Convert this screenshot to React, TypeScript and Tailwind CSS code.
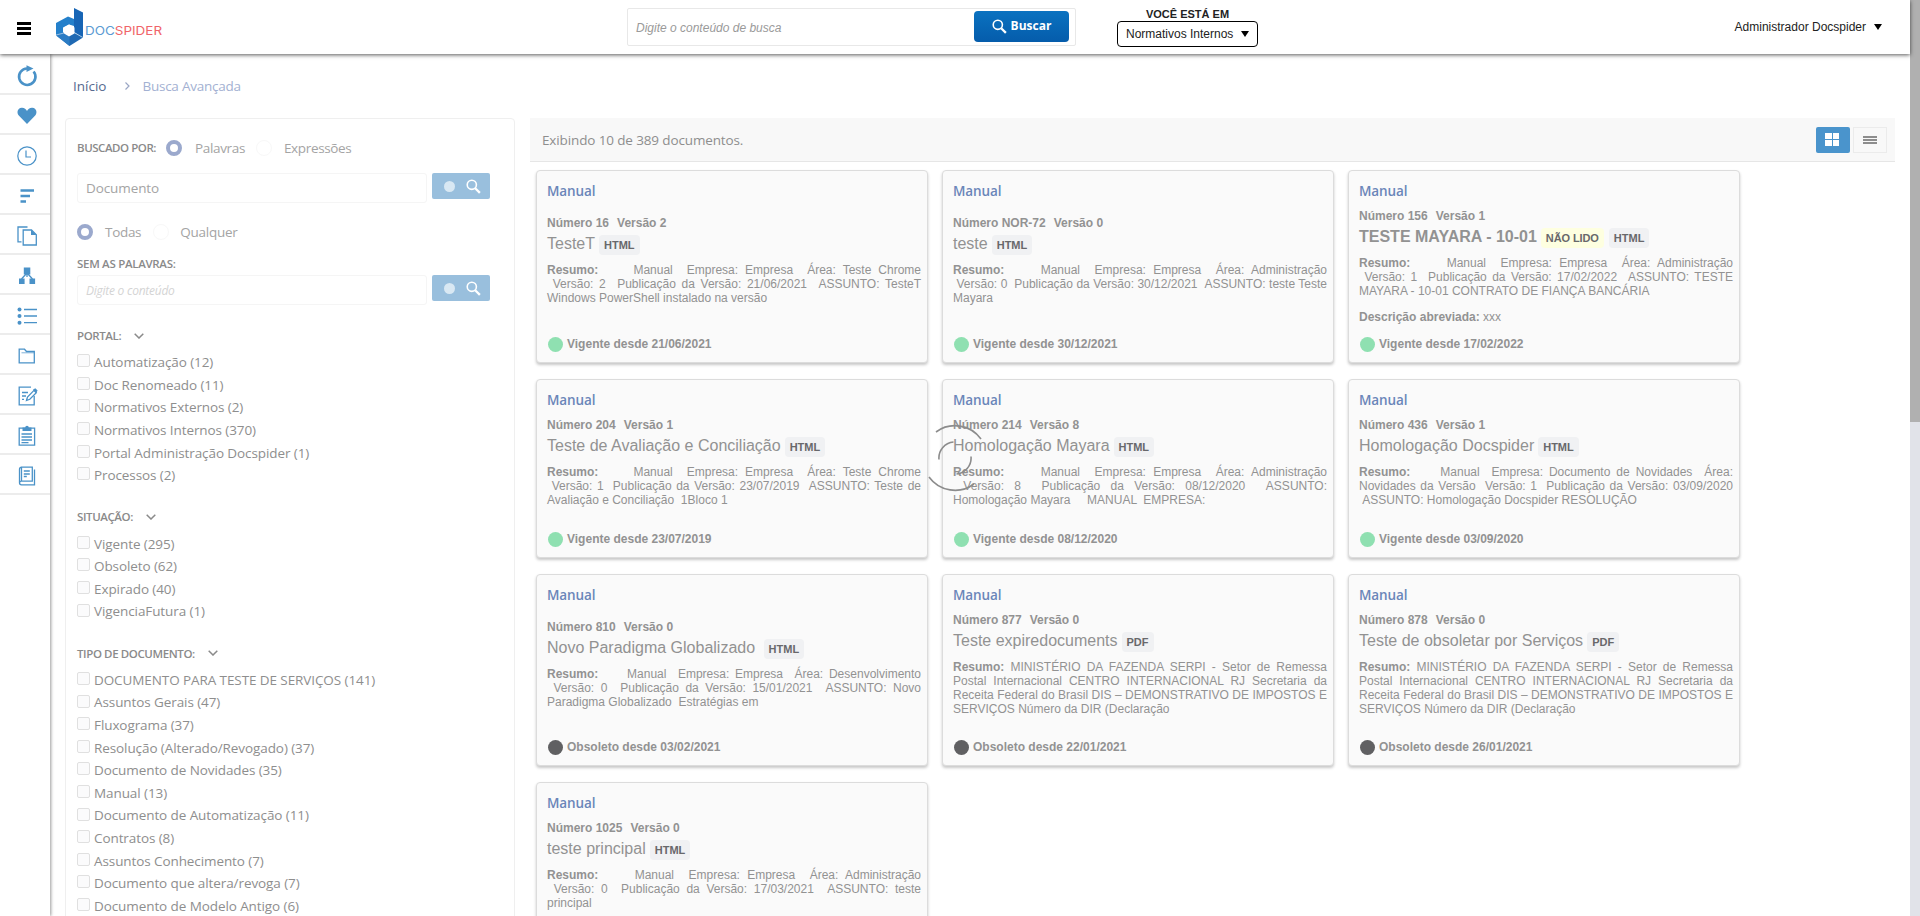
import React from "react";

const NB = "\u00a0";

type Doc = {
  numero: string;
  versao: string;
  title: string;
  type: string;
  unread?: boolean;
  lines: string[];
  extra?: string;
  status: string;
  obsolete?: boolean;
  lowered?: boolean;
};

const HEAD = `${NB}${NB}${NB}${NB} Manual ${NB}Empresa: `;
const MINISTERIO = [
  " MINISTÉRIO DA FAZENDA SERPI - Setor de Remessa",
  "Postal Internacional CENTRO INTERNACIONAL RJ Secretaria da",
  "Receita Federal do Brasil DIS – DEMONSTRATIVO DE IMPOSTOS E",
  "SERVIÇOS Número da DIR (Declaração",
];

const rows: { height: string; docs: Doc[] }[] = [
  {
    height: "h-[193px]",
    docs: [
      {
        numero: "16",
        versao: "2",
        title: "TesteT",
        type: "HTML",
        lines: [
          `${HEAD}Empresa ${NB}Área: Teste Chrome`,
          `${NB}Versão: 2 ${NB}Publicação da Versão: 21/06/2021 ${NB}ASSUNTO: TesteT`,
          "Windows PowerShell instalado na versão",
        ],
        status: "Vigente desde 21/06/2021",
        lowered: true,
      },
      {
        numero: "NOR-72",
        versao: "0",
        title: "teste",
        type: "HTML",
        lines: [
          `${HEAD}Empresa ${NB}Área: Administração`,
          `${NB}Versão: 0 ${NB}Publicação da Versão: 30/12/2021 ${NB}ASSUNTO: teste Teste`,
          "Mayara",
        ],
        status: "Vigente desde 30/12/2021",
        lowered: true,
      },
      {
        numero: "156",
        versao: "1",
        title: "TESTE MAYARA - 10-01",
        type: "HTML",
        unread: true,
        lines: [
          `${HEAD}Empresa ${NB}Área: Administração`,
          `${NB}Versão: 1 ${NB}Publicação da Versão: 17/02/2022 ${NB}ASSUNTO: TESTE`,
          "MAYARA - 10-01 CONTRATO DE FIANÇA BANCÁRIA",
        ],
        extra: "xxx",
        status: "Vigente desde 17/02/2022",
      },
    ],
  },
  {
    height: "h-[179px]",
    docs: [
      {
        numero: "204",
        versao: "1",
        title: "Teste de Avaliação e Conciliação",
        type: "HTML",
        lines: [
          `${HEAD}Empresa ${NB}Área: Teste Chrome`,
          `${NB}Versão: 1 ${NB}Publicação da Versão: 23/07/2019 ${NB}ASSUNTO: Teste de`,
          `Avaliação e Conciliação ${NB}1Bloco 1`,
        ],
        status: "Vigente desde 23/07/2019",
      },
      {
        numero: "214",
        versao: "8",
        title: "Homologação Mayara",
        type: "HTML",
        lines: [
          `${HEAD}Empresa ${NB}Área: Administração`,
          `${NB}Versão: 8 ${NB}Publicação da Versão: 08/12/2020 ${NB}ASSUNTO:`,
          `Homologação Mayara ${NB}${NB}${NB}${NB}MANUAL ${NB}EMPRESA:`,
        ],
        status: "Vigente desde 08/12/2020",
      },
      {
        numero: "436",
        versao: "1",
        title: "Homologação Docspider",
        type: "HTML",
        lines: [
          `${HEAD}Documento de Novidades ${NB}Área:`,
          `Novidades da Versão ${NB}Versão: 1 ${NB}Publicação da Versão: 03/09/2020`,
          `${NB}ASSUNTO: Homologação Docspider RESOLUÇÃO`,
        ],
        status: "Vigente desde 03/09/2020",
      },
    ],
  },
  {
    height: "h-[192px]",
    docs: [
      {
        numero: "810",
        versao: "0",
        title: `Novo Paradigma Globalizado${NB}`,
        type: "HTML",
        lines: [
          `${HEAD}Empresa ${NB}Área: Desenvolvimento`,
          `${NB}Versão: 0 ${NB}Publicação da Versão: 15/01/2021 ${NB}ASSUNTO: Novo`,
          `Paradigma Globalizado ${NB}Estratégias em`,
        ],
        status: "Obsoleto desde 03/02/2021",
        obsolete: true,
        lowered: true,
      },
      {
        numero: "877",
        versao: "0",
        title: "Teste expiredocuments",
        type: "PDF",
        lines: MINISTERIO,
        status: "Obsoleto desde 22/01/2021",
        obsolete: true,
      },
      {
        numero: "878",
        versao: "0",
        title: "Teste de obsoletar por Serviços",
        type: "PDF",
        lines: MINISTERIO,
        status: "Obsoleto desde 26/01/2021",
        obsolete: true,
      },
    ],
  },
  {
    height: "h-[192px]",
    docs: [
      {
        numero: "1025",
        versao: "0",
        title: "teste principal",
        type: "HTML",
        lines: [
          `${HEAD}Empresa ${NB}Área: Administração`,
          `${NB}Versão: 0 ${NB}Publicação da Versão: 17/03/2021 ${NB}ASSUNTO: teste`,
          "principal",
        ],
        status: "",
      },
    ],
  },
];

const filters = [
  {
    name: "PORTAL:",
    items: [
      "Automatização (12)",
      "Doc Renomeado (11)",
      "Normativos Externos (2)",
      "Normativos Internos (370)",
      "Portal Administração Docspider (1)",
      "Processos (2)",
    ],
  },
  {
    name: "SITUAÇÃO:",
    items: ["Vigente (295)", "Obsoleto (62)", "Expirado (40)", "VigenciaFutura (1)"],
  },
  {
    name: "TIPO DE DOCUMENTO:",
    items: [
      "DOCUMENTO PARA TESTE DE SERVIÇOS (141)",
      "Assuntos Gerais (47)",
      "Fluxograma (37)",
      "Resolução (Alterado/Revogado) (37)",
      "Documento de Novidades (35)",
      "Manual (13)",
      "Documento de Automatização (11)",
      "Contratos (8)",
      "Assuntos Conhecimento (7)",
      "Documento que altera/revoga (7)",
      "Documento de Modelo Antigo (6)",
    ],
  },
];

const railIcons: React.ReactNode[] = [
  <g key="refresh">
    <path d="M16.600 5.500A8.200 8.200 0 1 1 10 2.500" strokeWidth="2.600" />
    <path d="M9.500-.8 16.500 2.600 9.500 6Z" fill="currentColor" stroke="none" />
  </g>,
  <path
    key="heart"
    d="M10 18 1.800 9.600C-.6 6.800.4 2.200 4.600 1.800 7.200 1.600 9 3 10 5 11 3 12.800 1.600 15.400 1.800 19.600 2.200 20.600 6.800 18.200 9.600Z"
    fill="currentColor"
    stroke="none"
  />,
  <g key="clock" strokeWidth="1.200">
    <circle cx="10" cy="10" r="9.200" />
    <path d="M9 4.500V11h5" />
  </g>,
  <path key="bars" d="M3.500 4.500H17M3.500 10H13M3.500 15.500H9" strokeWidth="2.600" />,
  <g key="copy" strokeWidth="1.300">
    <path d="M4.500 15.800H1V1h9.500" />
    <path d="M6.200 4h8.300l4.800 4.800V19H6.200Z" />
    <path d="M14 3.800V9h5.500Z" fill="currentColor" stroke="none" />
  </g>,
  <g key="tree" strokeWidth="1.300">
    <path d="M10 8v3M9 8 4.500 13M11 8l4.500 5" />
    <path
      d="M6.800 1.500h6.500v7H6.800ZM2 12.500h5.600v5.600H2ZM12.500 12.500h5.600v5.600h-5.600Z"
      fill="currentColor"
      stroke="none"
    />
  </g>,
  <g key="list" strokeWidth="1.300">
    <path d="M7 3.500h13M7 10h13M7 16.700h13" />
    <g fill="currentColor" stroke="none">
      <circle cx="2.500" cy="3.500" r="2" />
      <circle cx="2.500" cy="10" r="2" />
      <circle cx="2.500" cy="16.700" r="2" />
    </g>
  </g>,
  <g key="folder" strokeWidth="1.300">
    <path d="M2.200 16.800V3.200h5.300l2 2.300h7.800v11.300Z" />
    <path d="M4.500 6.800h12.800" strokeWidth=".7" />
  </g>,
  <g key="edit" strokeWidth="1.300">
    <path d="M14 1.200H2.200v17.600h15V10" />
    <path d="M5 6.500h6M5 10h4M5 13.300h2M9 13.300h.8" />
    <path d="m9.500 14.500 1-3.500 6.500-6.600 2.300 2.300-6.500 6.600Z" />
    <path d="m17 3.800 1.200-.8 1.600 1.600-.8 1.400Z" fill="currentColor" />
  </g>,
  <g key="clipboard" strokeWidth="1.300">
    <path d="M2.200 2.200h15.400v17H2.200Z" />
    <path d="M5.500 1.500h2.700a1.800 1.800 0 0 1 3.600 0h2.700V5h-9Z" fill="currentColor" stroke="none" />
    <path d="M4.500 8h10.500M4.500 11h10.500M4.500 14h10.500M4.500 16.700h7" />
  </g>,
  <g key="book" strokeWidth="1.300">
    <path d="M4.500 1.200h10.800v14H4.500ZM4.500 1.200a2 2 0 0 0-2 2v13.600a2 2 0 0 0 2 2h13V3.500M2.500 17a2 2 0 0 1 2-1.800M6.800 5h6M6.800 8h6M6.800 10.500h3" />
  </g>,
];

function SearchIcon({ className }: { className: string }) {
  return (
    <svg viewBox="0 0 16 16" className={className} fill="none" stroke="currentColor">
      <circle cx="6.200" cy="6.200" r="4.900" strokeWidth="1.700" />
      <path d="m9.800 9.800 5 5" strokeWidth="2.400" />
    </svg>
  );
}

function Radio({ on, className }: { on?: boolean; className: string }) {
  return (
    <span
      className={`size-4 shrink-0 rounded-full ${on ? "border-[4.5px] border-[#9ba9cd]" : "border border-[#f8f8f8]"} ${className}`}
    />
  );
}

function SearchField({ children }: { children: React.ReactNode }) {
  return (
    <div className="flex items-start gap-[5px]">
      <div className="flex h-[30px] w-[350px] items-center rounded-[3px] border border-[#f5f5f5] pt-px pl-2">
        {children}
      </div>
      <button className="flex h-[26px] w-[58px] items-center rounded-[2px] bg-[#99bfdd] pl-3 text-white">
        <span className="size-[11px] rounded-full bg-[#d9e8f3]" />
        <SearchIcon className="ml-[11px] size-[15px]" />
      </button>
    </div>
  );
}

function Badge({ children, yellow }: { children: React.ReactNode; yellow?: boolean }) {
  return (
    <span
      className={`flex h-5 items-center rounded-[4px] text-[11px] leading-5 font-bold text-[#68686b] ${yellow ? "bg-[#feffe0] px-[5px] tracking-[-0.1px]" : "bg-[#f0f1f3] px-[5px]"}`}
    >
      {children}
    </span>
  );
}

function Card({ doc, height }: { doc: Doc; height: string }) {
  return (
    <article
      className={`flex w-[392px] flex-col rounded-[4px] border border-[#dcdcdc] bg-[#fafafa] pt-[10px] pr-[6px] pb-[10px] pl-[10px] text-xs text-[#929292] shadow-[0_2px_3px_rgba(0,0,0,0.22)] ${height}`}
    >
      <h3 className="font-['Open_Sans',sans-serif] text-[13.500px] leading-5 font-semibold tracking-[-0.1px] text-[#6a86b9]">
        Manual
      </h3>
      <div className={`flex gap-2 leading-[14px] font-bold ${doc.lowered ? "mt-[15px]" : "mt-2"}`}>
        <span>Número {doc.numero}</span>
        <span>Versão {doc.versao}</span>
      </div>
      <div className="mt-1 flex h-5 gap-1">
        <h2 className={`text-base leading-5 whitespace-pre ${doc.unread ? "font-bold" : ""}`}>{doc.title}</h2>
        <div className="flex gap-[5px] pt-px">
          {doc.unread && <Badge yellow>NÃO LIDO</Badge>}
          <Badge>{doc.type}</Badge>
        </div>
      </div>
      <div className="mt-[9px] leading-[14px]">
        {doc.lines.map((line, i) => (
          <p
            key={i}
            className={`whitespace-nowrap ${i < doc.lines.length - 1 ? "text-justify [text-align-last:justify]" : ""}`}
          >
            {i === 0 && <b>Resumo:</b>}
            {line}
          </p>
        ))}
      </div>
      {doc.extra && (
        <p className="mt-3 leading-[14px]">
          <b>Descrição abreviada:</b> {doc.extra}
        </p>
      )}
      {doc.status && (
        <div className="mt-auto flex items-center gap-1 pl-px leading-[15px] font-bold">
          <span className={`size-[15px] rounded-full ${doc.obsolete ? "bg-[#606062]" : "bg-[#8fe0b1]"}`} />
          {doc.status}
        </div>
      )}
    </article>
  );
}

function Logo() {
  return (
    <div className="ml-[25px] flex items-center">
      <svg viewBox="0 0 27 38" className="h-[38px] w-[27px]">
        <path d="M18 0 27 4.500V30L18 24Z" fill="#1765b5" />
        <path d="M0 15 12 8.500l6 2.500v7l-5-1.500-6 3v10L0 27Z" fill="#2480cb" />
        <path d="M0 27l8-2.500 5 3 5-3 9 5L13.500 38Z" fill="#1f69b3" />
        <path d="M0 27.500 13.500 38V29L7 25Z" fill="#2b7cc4" />
        <path d="M13 16.500 18.500 19.500V25.500L13 28.500 8 25.500V19.500Z" fill="#fff" />
        <path d="m0 27 8-2M27 29.500l-9-5" stroke="#cfe4f5" strokeWidth=".7" />
      </svg>
      <span className="mt-[8px] ml-[2px] w-[78px] origin-left scale-x-[1.120] font-[Inter,sans-serif] text-[12px] leading-3 text-[#5b9bd3]">
        DOC<span className="text-[#f0646a]">SPIDER</span>
      </span>
    </div>
  );
}

function Caret({ className }: { className: string }) {
  return (
    <svg viewBox="0 0 8 6" className={`h-1.5 w-2 ${className}`}>
      <path d="M0 0h8L4 6Z" fill="#000" />
    </svg>
  );
}

export default function App() {
  return (
    <div className="flex h-[916px] w-[1920px] overflow-hidden bg-white font-['Liberation_Sans',Arial,sans-serif]">
      <div className="flex w-[1910px] flex-col">
        <header className="relative z-20 flex h-[54px] shrink-0 bg-white shadow-[0_1px_4px_rgba(0,0,0,0.65)]">
          <div className="flex w-[627px] pl-[17px]">
            <button className="mt-[22px] flex h-[13px] w-[14px] flex-col justify-between">
              <i className="h-[3px] bg-black" />
              <i className="h-[3px] bg-black" />
              <i className="h-[3px] bg-black" />
            </button>
            <Logo />
          </div>
          <div className="mt-2 flex h-[38px] w-[449px] items-center justify-between rounded-[2px] border border-[#e8e8e8] pr-[6px] pl-2">
            <span className="mt-px text-xs text-[#9a9a9a] italic">Digite o conteúdo de busca</span>
            <button className="mb-px flex h-[31px] w-[95px] items-center justify-center gap-1 rounded-[4px] bg-linear-to-b from-[#0b72c0] to-[#055cab] pb-px font-['Open_Sans',sans-serif] text-[12px] font-bold text-white">
              <SearchIcon className="size-[15px]" />
              Buscar
            </button>
          </div>
          <div className="ml-[41px] flex w-[141px] flex-col items-center pt-2">
            <span className="text-[11px] leading-[13px] font-bold text-[#222]">VOCÊ ESTÁ EM</span>
            <div className="flex h-[26px] w-full items-center justify-between rounded-[4px] border border-black pr-2 pl-2 text-xs text-[#222]">
              Normativos Internos
              <Caret className="" />
            </div>
          </div>
          <div className="ml-auto flex h-[54px] items-center pr-[28px] text-xs text-[#222]">
            Administrador Docspider
            <Caret className="ml-2" />
          </div>
        </header>

        <div className="flex min-h-0 flex-1">
          <nav className="relative z-10 w-[50px] shrink-0 bg-white pt-px shadow-[1px_0_3px_rgba(0,0,0,0.4)]">
            {railIcons.map((icon, i) => (
              <div key={i} className="flex h-10 justify-center border-b-2 border-[#ececec] pt-[11px] pl-1">
                <svg
                  viewBox="0 0 20 20"
                  className="size-5 overflow-visible text-[#4a92c8]"
                  fill="none"
                  stroke="currentColor"
                >
                  {icon}
                </svg>
              </div>
            ))}
          </nav>

          <main className="flex min-w-0 flex-1 flex-col pl-[15px] font-['Open_Sans',sans-serif]">
            <div className="flex h-16 shrink-0 items-center pl-2 text-[13.500px]">
              <span className="text-[#56698f]">Início</span>
              <svg viewBox="0 0 5 8" className="ml-[19px] h-2 w-[5px]" fill="none" stroke="#9aa6c4">
                <path d="m.5.500 3.500 3.500-3.500 3.500" strokeWidth="1.200" />
              </svg>
              <span className="ml-3 tracking-[-0.250px] text-[#a3b1d2]">Busca Avançada</span>
            </div>

            <div className="flex min-h-0 flex-1">
              <aside className="h-[1100px] w-[450px] shrink-0 rounded-[4px] border border-[#efefef] px-[11px] text-[13.500px] text-[#8e8e8e]">
                <div className="mt-[19px] flex h-5 items-center text-[#a4a4a4]">
                  <span className="-mt-px text-[11.500px] font-semibold tracking-[-0.450px] text-[#8a8a8a]">
                    BUSCADO POR:
                  </span>
                  <Radio on className="ml-[10px]" />
                  <span className="ml-[13px] tracking-[-0.350px]">Palavras</span>
                  <Radio className="ml-[11px]" />
                  <span className="ml-3 tracking-[-0.350px]">Expressões</span>
                </div>
                <div className="mt-[15px]">
                  <SearchField>
                    <span className="tracking-[-0.100px] text-[#a4a4a4]">Documento</span>
                  </SearchField>
                </div>
                <div className="mt-[19px] flex h-5 items-center text-[#a4a4a4]">
                  <Radio on className="" />
                  <span className="ml-3 tracking-[-0.300px]">Todas</span>
                  <Radio className="ml-3" />
                  <span className="ml-[11px] tracking-[-0.250px]">Qualquer</span>
                </div>
                <p className="mt-[13px] h-5 text-[11.500px] leading-[17px] font-semibold tracking-[-0.300px] text-[#8a8a8a]">
                  SEM AS PALAVRAS:
                </p>
                <SearchField>
                  <span className="text-[12px] tracking-[-0.250px] text-[#d4d4d4] italic">Digite o conteúdo</span>
                </SearchField>
                <div className="pt-[20px]">
                  {filters.map((f) => (
                    <section key={f.name} className="mb-[19.900px]">
                      <div className="flex h-[26px] items-center pb-[5px]">
                        <span className="text-[11.500px] font-semibold tracking-[-0.400px] text-[#8a8a8a]">
                          {f.name}
                        </span>
                        <svg viewBox="0 0 10 6" className="ml-[13px] h-1.5 w-2.5" fill="none" stroke="#8a8a8a">
                          <path d="m.7.700 4.300 4.300L9.300.700" strokeWidth="1.500" />
                        </svg>
                      </div>
                      {f.items.map((item) => (
                        <label
                          key={item}
                          className="flex h-[22.600px] items-center gap-1 tracking-[-0.090px] whitespace-nowrap"
                        >
                          <span className="mb-[3px] size-[13px] shrink-0 rounded-[2px] border border-[#e0e0e0] bg-[#fbfbfc]" />
                          {item}
                        </label>
                      ))}
                    </section>
                  ))}
                </div>
              </aside>

              <section className="ml-[15px] w-[1365px]">
                <div className="flex h-[44px] items-center border-b border-[#e6e6e6] bg-[#f8f8f8] pr-2 pl-3">
                  <span className="pt-0.5 text-[13.500px] tracking-[-0.130px] text-[#8e8e8e]">
                    Exibindo 10 de 389 documentos.
                  </span>
                  <button className="ml-auto flex h-[26px] w-[34px] items-center justify-center rounded-[2px] bg-[#4a94cc] pr-0.5">
                    <span className="grid h-[13px] w-[14px] grid-cols-2 gap-px">
                      <i className="bg-white" />
                      <i className="bg-white" />
                      <i className="bg-white" />
                      <i className="bg-white" />
                    </span>
                  </button>
                  <button className="ml-[3px] flex h-[26px] w-[34px] flex-col items-center justify-center gap-px border border-[#ebebeb]">
                    <i className="h-0.5 w-[14px] bg-[#8d8d8d]" />
                    <i className="h-0.5 w-[14px] bg-[#8d8d8d]" />
                    <i className="h-0.5 w-[14px] bg-[#8d8d8d]" />
                  </button>
                </div>
                <div className="flex flex-col gap-4 pt-2 pl-[6px] font-['Liberation_Sans',Arial,sans-serif]">
                  {rows.map((row, i) => (
                    <div key={i} className="flex gap-[14px]">
                      {row.docs.map((doc) => (
                        <Card key={doc.numero} doc={doc} height={row.height} />
                      ))}
                    </div>
                  ))}
                </div>
              </section>
            </div>
          </main>
        </div>
      </div>

      <div className="w-[10px] bg-[#e1e3e9]">
        <div className="h-[422px] bg-[#b0b0b0]" />
      </div>

      <svg
        viewBox="-34 -34 68 68"
        className="absolute top-[424px] left-[921px] z-30 size-[68px]"
        fill="none"
        stroke="#8c8c8c"
        strokeWidth="1.600"
      >
        <path d="M-19-26A32 32 0 0 1 26-19M19 26A32 32 0 0 1-26 19M-16 1.500A16 16 0 0 1-1.500-16M16-1.500A16 16 0 0 1 1.500 16" />
      </svg>
    </div>
  );
}
